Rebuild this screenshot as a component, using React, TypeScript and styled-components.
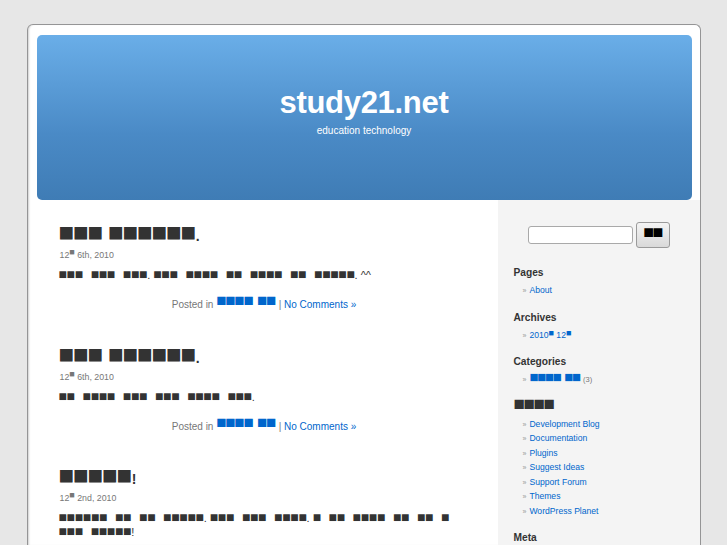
import React from "react";
import styled, { createGlobalStyle } from "styled-components";

const GlobalStyle = createGlobalStyle`
  html, body {
    margin: 0;
    padding: 0;
  }
  body {
    background: #e7e7e7;
    font-family: "Liberation Sans", Arial, sans-serif;
    color: #333;
    overflow: hidden;
  }
  a {
    color: #0066cc;
    text-decoration: none;
  }
`;

const Page = styled.div`
  box-sizing: border-box;
  width: 674px;
  height: 521px;
  margin: 24px auto 0;
  padding-top: 10px;
  background: #fff;
  border: 1px solid #959596;
  border-bottom: none;
  border-radius: 6px 6px 0 0;
  box-shadow: inset 2px 0 2px -1px #d0d0d0;
  display: flex;
  flex-direction: column;
  overflow: hidden;
`;

const Header = styled.header`
  flex-shrink: 0;
  height: 165px;
  margin: 0 8px 0 9px;
  border-radius: 5px;
  background: linear-gradient(#6aaee8, #4a8ac6 60%, #3f7cb5);
  color: #fff;
  display: flex;
  flex-direction: column;
  align-items: center;
`;

const SiteTitle = styled.h1`
  margin: 50px 0 0;
  font-size: 31px;
  line-height: 36px;
  font-weight: bold;
  letter-spacing: -0.3px;
`;

const Description = styled.div`
  margin-top: 3px;
  font-size: 10px;
  line-height: 14px;
`;

const Main = styled.div`
  flex: 1;
  display: flex;
`;

const Content = styled.main`
  width: 411px;
  flex-shrink: 0;
  padding: 26px 28px 0 31px;
`;

const Post = styled.article`
  margin-bottom: 35.5px;
`;

const PostTitle = styled.h2`
  margin: 0;
  height: 23px;
  line-height: 20px;
  font-size: 14px;
  font-weight: bold;
  color: #333;
`;

const PostDate = styled.div`
  padding-left: 1px;
  font-size: 8.8px;
  line-height: 12px;
  color: #777;
`;

const Entry = styled.p`
  margin: 7px 0 0;
  font-size: 11px;
  line-height: 14px;
  color: #333;
`;

const PostMeta = styled.div`
  margin-top: 16px;
  font-size: 10px;
  line-height: 14px;
  color: #777;
  text-align: center;
`;

const Tofu = styled.span<{ $fs: number; $ls: number; $ws: number; $raise?: number }>`
  font-family: "Liberation Sans", "DejaVu Sans", sans-serif;
  font-size: ${({ $fs }) => $fs}px;
  letter-spacing: ${({ $ls }) => $ls}px;
  word-spacing: ${({ $ws }) => $ws}px;
  margin-right: ${({ $ls }) => Math.max(0, -$ls - 0.5)}px;
  position: relative;
  top: ${({ $raise }) => -($raise ?? 0)}px;
  line-height: 0;
`;

const Sidebar = styled.aside`
  flex: 1;
  background: #f4f4f4;
  padding: 25px 0 0 16px;
`;

const SearchForm = styled.form`
  display: flex;
  align-items: center;
  justify-content: center;
  gap: 3px;
  margin: -3px 16px 18px 0;
`;

const SearchInput = styled.input`
  box-sizing: border-box;
  width: 105px;
  height: 18px;
  border: 1px solid #a9a9a9;
  border-radius: 3px;
  background: #fff;
`;

const SearchButton = styled.button`
  box-sizing: border-box;
  width: 34px;
  height: 26px;
  padding: 0 0 6px;
  border: 1px solid #9a9a9a;
  border-radius: 3px;
  background: linear-gradient(#f4f4f4, #d9d9d9);
  color: #000;
  text-align: center;
  font-family: "Liberation Sans", "DejaVu Sans", sans-serif;
  font-size: 18px;
  line-height: 14px;
  letter-spacing: -1.5px;
`;

const Widget = styled.section`
  margin-bottom: 13px;
`;

const WidgetTitle = styled.h3`
  margin: 0 0 3px;
  height: 14px;
  font-size: 10.2px;
  line-height: 14px;
  font-weight: bold;
  color: #333;
`;

const LinkList = styled.ul`
  margin: 0;
  padding: 0 0 0 9px;
  list-style: none;
`;

const LinkItem = styled.li`
  height: 14.5px;
  font-size: 8.6px;
  line-height: 14.5px;

  &::before {
    content: "»";
    color: #999;
    font-size: 7px;
    line-height: 0;
    margin-right: 3px;
  }
`;

const Count = styled.span`
  color: #777;
  font-size: 7.5px;
`;

type TofuSize = { $fs: number; $ls: number; $ws: number; $raise?: number };

const TITLE: TofuSize = { $fs: 26, $ls: -1.2, $ws: 0 };
const BODY: TofuSize = { $fs: 14, $ls: -0.35, $ws: 4.3 };
const META: TofuSize = { $fs: 17, $ls: -1.2, $ws: 1, $raise: 2 };
const SMALL: TofuSize = { $fs: 9, $ls: 0, $ws: 0, $raise: 3 };

function Mixed({ text, size }: { text: string; size: TofuSize }) {
  const parts = text.split(/(■(?:[■ ]*■)?)/);
  return (
    <>
      {parts.map((p, i) =>
        p.startsWith("■") ? (
          <Tofu key={i} {...size}>
            {p}
          </Tofu>
        ) : (
          p
        )
      )}
    </>
  );
}

const posts = [
  {
    id: 1,
    title: "■■■ ■■■■■■.",
    day: "6th",
    body: "■■■ ■■■ ■■■. ■■■ ■■■■ ■■ ■■■■ ■■ ■■■■■. ^^",
  },
  {
    id: 2,
    title: "■■■ ■■■■■■.",
    day: "6th",
    body: "■■ ■■■■ ■■■ ■■■ ■■■■ ■■■.",
  },
  {
    id: 3,
    title: "■■■■■!",
    day: "2nd",
    body: "■■■■■■ ■■ ■■ ■■■■■. ■■■ ■■■ ■■■■. ■ ■■ ■■■■ ■■ ■■ ■ ■■■ ■■■■■!",
  },
];

const links = [
  "Development Blog",
  "Documentation",
  "Plugins",
  "Suggest Ideas",
  "Support Forum",
  "Themes",
  "WordPress Planet",
];

export default function App() {
  return (
    <>
      <GlobalStyle />
      <Page>
        <Header>
          <SiteTitle>study21.net</SiteTitle>
          <Description>education technology</Description>
        </Header>
        <Main>
          <Content>
            {posts.map((post) => (
              <Post key={post.id}>
                <PostTitle>
                  <Mixed text={post.title} size={TITLE} />
                </PostTitle>
                <PostDate>
                  12<Tofu {...SMALL}>■</Tofu> {post.day}, 2010
                </PostDate>
                <Entry>
                  <Mixed text={post.body} size={BODY} />
                </Entry>
                <PostMeta>
                  Posted in{" "}
                  <a href="#">
                    <Mixed text="■■■■ ■■" size={META} />
                  </a>{" "}
                  | <a href="#">No Comments »</a>
                </PostMeta>
              </Post>
            ))}
          </Content>
          <Sidebar>
            <SearchForm>
              <SearchInput type="text" />
              <SearchButton type="button">■■</SearchButton>
            </SearchForm>
            <Widget>
              <WidgetTitle>Pages</WidgetTitle>
              <LinkList>
                <LinkItem>
                  <a href="#">About</a>
                </LinkItem>
              </LinkList>
            </Widget>
            <Widget>
              <WidgetTitle>Archives</WidgetTitle>
              <LinkList>
                <LinkItem>
                  <a href="#">
                    2010<Tofu {...SMALL} $raise={2}>■</Tofu> 12
                    <Tofu {...SMALL} $raise={2}>■</Tofu>
                  </a>
                </LinkItem>
              </LinkList>
            </Widget>
            <Widget>
              <WidgetTitle>Categories</WidgetTitle>
              <LinkList>
                <LinkItem>
                  <a href="#">
                    <Mixed text="■■■■ ■■" size={{ $fs: 15, $ls: -1.3, $ws: 1 }} />
                  </a>{" "}
                  <Count>(3)</Count>
                </LinkItem>
              </LinkList>
            </Widget>
            <Widget>
              <WidgetTitle>
                <Mixed text="■■■■" size={{ $fs: 19, $ls: -1.5, $ws: 0 }} />
              </WidgetTitle>
              <LinkList>
                {links.map((l) => (
                  <LinkItem key={l}>
                    <a href="#">{l}</a>
                  </LinkItem>
                ))}
              </LinkList>
            </Widget>
            <Widget>
              <WidgetTitle>Meta</WidgetTitle>
            </Widget>
          </Sidebar>
        </Main>
      </Page>
    </>
  );
}
